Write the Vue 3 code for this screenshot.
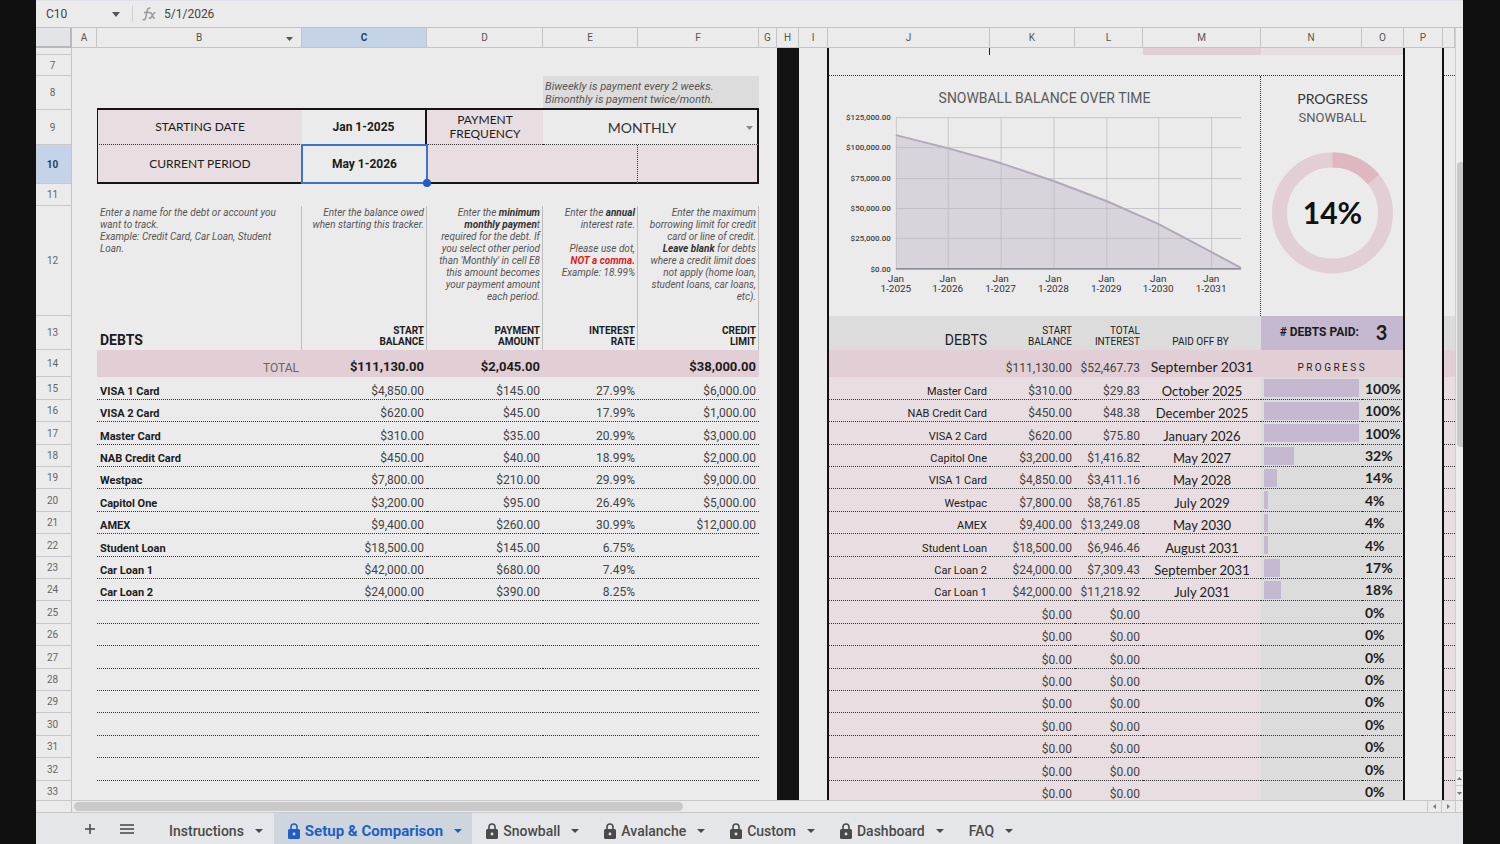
<script setup>
import { ref } from 'vue'

const nameBox = ref('C10')
const formula = ref('5/1/2026')
const frequency = ref('MONTHLY')

const columns = [
  ['A', 25], ['B', 205], ['C', 125], ['D', 116], ['E', 95], ['F', 121], ['G', 18], ['H', 22], ['I', 29],
  ['J', 162], ['K', 85], ['L', 68], ['M', 118], ['N', 101], ['O', 42], ['P', 39], ['Q', 12],
]

const debts = [
  ['VISA 1 Card', '$4,850.00', '$145.00', '27.99%', '$6,000.00'],
  ['VISA 2 Card', '$620.00', '$45.00', '17.99%', '$1,000.00'],
  ['Master Card', '$310.00', '$35.00', '20.99%', '$3,000.00'],
  ['NAB Credit Card', '$450.00', '$40.00', '18.99%', '$2,000.00'],
  ['Westpac', '$7,800.00', '$210.00', '29.99%', '$9,000.00'],
  ['Capitol One', '$3,200.00', '$95.00', '26.49%', '$5,000.00'],
  ['AMEX', '$9,400.00', '$260.00', '30.99%', '$12,000.00'],
  ['Student Loan', '$18,500.00', '$145.00', '6.75%', ''],
  ['Car Loan 1', '$42,000.00', '$680.00', '7.49%', ''],
  ['Car Loan 2', '$24,000.00', '$390.00', '8.25%', ''],
]

const payoffs = [
  ['Master Card', '$310.00', '$29.83', 'October 2025', 100],
  ['NAB Credit Card', '$450.00', '$48.38', 'December 2025', 100],
  ['VISA 2 Card', '$620.00', '$75.80', 'January 2026', 100],
  ['Capitol One', '$3,200.00', '$1,416.82', 'May 2027', 32],
  ['VISA 1 Card', '$4,850.00', '$3,411.16', 'May 2028', 14],
  ['Westpac', '$7,800.00', '$8,761.85', 'July 2029', 4],
  ['AMEX', '$9,400.00', '$13,249.08', 'May 2030', 4],
  ['Student Loan', '$18,500.00', '$6,946.46', 'August 2031', 4],
  ['Car Loan 2', '$24,000.00', '$7,309.43', 'September 2031', 17],
  ['Car Loan 1', '$42,000.00', '$11,218.92', 'July 2031', 18],
]

const rows = Array.from({ length: 19 }, (_, i) => ({
  n: 15 + i,
  tall: i % 5 === 0 || i % 5 === 2,
  left: debts[i] || ['', '', '', '', ''],
  right: payoffs[i] || ['', '$0.00', '$0.00', '', 0],
}))

const yTicks = [
  ['$125,000.00', 41], ['$100,000.00', 71], ['$75,000.00', 102],
  ['$50,000.00', 132], ['$25,000.00', 162], ['$0.00', 193],
]
const xTicks = [
  ['1-2025', 67], ['1-2026', 119], ['1-2027', 172], ['1-2028', 225],
  ['1-2029', 278], ['1-2030', 330], ['1-2031', 383],
]
const curve = '67,59 119,72 172,87 225,105 278,125 330,148 383,176 413,192'

const ring = 2 * Math.PI * 53
const slice = `${ring * 0.14} ${ring}`

const tabs = [
  { name: 'Instructions' },
  { name: 'Setup & Comparison', lock: true, active: true },
  { name: 'Snowball', lock: true },
  { name: 'Avalanche', lock: true },
  { name: 'Custom', lock: true },
  { name: 'Dashboard', lock: true },
  { name: 'FAQ' },
]
</script>

<template>
  <div class="app">
    <header class="formula-bar">
      <input v-model="nameBox" class="name-box" aria-label="Name box" />
      <button class="plain" aria-label="Named ranges">
        <svg width="8" height="5" viewBox="0 0 8 5"><path d="M0 0h8L4 5z" fill="#555" /></svg>
      </button>
      <span class="divider"></span>
      <svg class="fx" width="16" height="14" viewBox="0 0 16 14" fill="none" stroke="#999" stroke-width="1.5">
        <path d="M8.5 1.2C6.5.6 5.6 1.6 5.2 3.4L3.7 10.6C3.3 12.5 2.4 13.2.6 12.7M2 5.5H8M7.5 5.5C9.2 5.2 9.7 6.2 10.3 8.2S11.5 11.500 13 11M13.5 5.6C11.5 5.2 10.5 8 9.8 9.3S8 11.5 6.8 10.9" />
      </svg>
      <input v-model="formula" class="formula" aria-label="Formula" />
    </header>

    <main class="work">
      <div class="sheet">
        <table>
          <colgroup>
            <col class="w-num" />
            <col v-for="c in columns" :key="c[0]" :style="{ width: c[0] === 'Q' ? 'auto' : c[1] + 'px' }" />
          </colgroup>
          <thead>
            <tr class="heads">
              <td class="corner"></td>
              <th v-for="c in columns" :key="c[0]" scope="col" :class="{ picked: c[0] === 'C' }">
                <template v-if="c[0] !== 'Q'">{{ c[0] }}</template>
                <svg v-if="c[0] === 'B'" class="filter" width="7" height="4" viewBox="0 0 7 4"><path d="M0 0h7L3.5 4z" fill="#555" /></svg>
              </th>
            </tr>
          </thead>
          <tbody>
            <tr class="r6">
              <th></th><td colspan="7"></td><td class="ink"></td><td></td>
              <td class="edge tick"></td><td colspan="2"></td><td class="rose"></td><td colspan="2" class="blush"></td>
              <td class="edge"></td><td class="edge"></td>
            </tr>
            <tr class="r7">
              <th scope="row">7</th><td colspan="7"></td><td class="ink"></td><td></td>
              <td colspan="6" class="edge dots"></td><td class="edge"></td><td class="edge dots"></td>
            </tr>
            <tr class="r8">
              <th scope="row">8</th><td></td>
              <td colspan="3" class="thick-b"></td>
              <td colspan="2" class="thick-b hint">Biweekly is payment every 2 weeks.<br />Bimonthly is payment twice/month.</td>
              <td></td><td class="ink"></td><td></td>
              <td colspan="4" rowspan="5" class="edge chart">
                <svg viewBox="0 0 432 240" role="img" aria-label="Snowball balance over time">
                  <text x="216" y="27" class="c-title">SNOWBALL BALANCE OVER TIME</text>
                  <polygon :points="`67,193 ${curve} 413,193`" fill="#d9d4db" />
                  <g stroke="#bcb8bf" stroke-opacity=".7">
                    <line v-for="t in yTicks" :key="t[0]" x1="67" x2="413" :y1="t[1] + 0.5" :y2="t[1] + 0.5" />
                    <line v-for="t in xTicks" :key="t[0]" :x1="t[1] + 0.5" :x2="t[1] + 0.5" y1="41" y2="193" />
                  </g>
                  <line x1="67" x2="413" y1="193" y2="193" stroke="#8f8b92" stroke-width="1.5" />
                  <polyline :points="curve" fill="none" stroke="#b3a8bb" stroke-width="2" stroke-linejoin="round" />
                  <text v-for="t in yTicks" :key="t[0]" x="62" :y="t[1] + 3" class="c-y">{{ t[0] }}</text>
                  <g v-for="t in xTicks" :key="t[0]" class="c-x">
                    <text :x="t[1]" y="206">Jan</text>
                    <text :x="t[1]" y="216">{{ t[0] }}</text>
                  </g>
                </svg>
              </td>
              <td colspan="2" rowspan="5" class="chart">
                <svg viewBox="0 0 142 240" role="img" aria-label="Snowball progress">
                  <text x="71" y="28" class="d-thin">PROGRESS</text>
                  <text x="71" y="46" class="d-sub">SNOWBALL</text>
                  <circle cx="71" cy="137" r="53" fill="none" stroke="#e2ced5" stroke-width="15" />
                  <circle cx="71" cy="137" r="53" fill="none" stroke="#deb7c1" stroke-width="15" :stroke-dasharray="slice" transform="rotate(-90 71 137)" />
                  <text x="71" y="148" class="d-num">14%</text>
                </svg>
              </td>
              <td class="edge"></td><td class="edge"></td>
            </tr>
            <tr class="r9">
              <th scope="row">9</th><td></td>
              <td class="thick-l blush dots label">STARTING DATE</td>
              <td class="thick-r dots date">Jan 1-2025</td>
              <td class="blush dots label"><label for="freq">PAYMENT<br />FREQUENCY</label></td>
              <td colspan="2" class="thick-r dots pick">
                <select id="freq" v-model="frequency">
                  <option>MONTHLY</option><option>BIWEEKLY</option><option>BIMONTHLY</option>
                </select>
                <svg class="caret" width="7" height="4" viewBox="0 0 7 4"><path d="M0 0h7L3.5 4z" fill="#888" /></svg>
              </td>
              <td></td><td class="ink"></td><td></td><td class="edge"></td><td class="edge"></td>
            </tr>
            <tr class="r10">
              <th scope="row" class="picked">10</th><td></td>
              <td class="thick-l thick-b blush label">CURRENT PERIOD</td>
              <td class="thick-b date current">May 1-2026<span class="selection"></span></td>
              <td colspan="2" class="thick-b blush dots-r"></td>
              <td class="thick-b thick-r blush"></td>
              <td></td><td class="ink"></td><td></td><td class="edge"></td><td class="edge"></td>
            </tr>
            <tr class="r11">
              <th scope="row">11</th><td colspan="7"></td><td class="ink"></td><td></td><td class="edge"></td><td class="edge"></td>
            </tr>
            <tr class="r12">
              <th scope="row">12</th><td></td>
              <td class="rule help first">Enter a name for the debt or account you<br />want to track.<br />Example: Credit Card, Car Loan, Student<br />Loan.</td>
              <td class="rule help">Enter the balance owed<br />when starting this tracker.</td>
              <td class="rule help">Enter the <b>minimum</b><br /><b>monthly paymen</b>t<br />required for the debt. If<br />you select other period<br />than 'Monthly' in cell E8<br />this amount becomes<br />your payment amount<br />each period.</td>
              <td class="rule help">Enter the <b>annual</b><br />interest rate.<br /><br />Please use dot,<br /><b class="red">NOT a comma.</b><br />Example: 18.99%</td>
              <td class="rule help">Enter the maximum<br />borrowing limit for credit<br />card or line of credit.<br /><b>Leave blank</b> for debts<br />where a credit limit does<br />not apply (home loan,<br />student loans, car loans,<br />etc).</td>
              <td></td><td class="ink"></td><td></td><td class="edge"></td><td class="edge"></td>
            </tr>
            <tr class="r13">
              <th scope="row">13</th><td></td>
              <td class="rule big left"><b>DEBTS</b></td>
              <td class="rule"><b>START<br />BALANCE</b></td>
              <td class="rule"><b>PAYMENT<br />AMOUNT</b></td>
              <td class="rule"><b>INTEREST<br />RATE</b></td>
              <td class="rule"><b>CREDIT<br />LIMIT</b></td>
              <td></td><td class="ink"></td><td></td>
              <td class="edge ash big">DEBTS</td>
              <td class="ash">START<br />BALANCE</td>
              <td class="ash">TOTAL<br />INTEREST</td>
              <td class="ash mid">PAID OFF BY</td>
              <td class="lilac paid">#&nbsp;DEBTS&nbsp;PAID:</td>
              <td class="lilac count">3</td>
              <td class="edge"></td><td class="edge ash"></td>
            </tr>
            <tr class="r14">
              <th scope="row">14</th><td></td>
              <td class="rose total">TOTAL</td>
              <td class="rose sum">$111,130.00</td>
              <td class="rose sum">$2,045.00</td>
              <td class="rose"></td>
              <td class="rose sum">$38,000.00</td>
              <td></td><td class="ink"></td><td></td>
              <td class="edge rose"></td>
              <td class="rose num">$111,130.00</td>
              <td class="rose num">$52,467.73</td>
              <td class="rose when lead">September 2031</td>
              <td colspan="2" class="rose spaced">P R O G R E S S</td>
              <td class="edge"></td><td class="edge rose"></td>
            </tr>
            <tr v-for="r in rows" :key="r.n" class="item" :class="{ tall: r.tall }">
              <th scope="row">{{ r.n }}</th><td></td>
              <td class="dots left"><b>{{ r.left[0] }}</b></td>
              <td v-for="k in 4" :key="k" class="dots num">{{ r.left[k] }}</td>
              <td></td><td class="ink"></td><td></td>
              <td class="edge blush dots">{{ r.right[0] }}</td>
              <td class="blush dots num">{{ r.right[1] }}</td>
              <td class="blush dots num">{{ r.right[2] }}</td>
              <td class="blush dots when">{{ r.right[3] }}</td>
              <td class="ash dots meter"><div class="bar" :style="{ width: r.right[4] + '%' }"></div></td>
              <td class="ash dots pct">{{ r.right[4] }}%</td>
              <td class="edge"></td><td class="edge blush dots"></td>
            </tr>
          </tbody>
        </table>
      </div>
      <div class="v-scroll">
        <div class="v-track"><div class="v-thumb"></div></div>
        <button class="v-btn" aria-label="Scroll up"><svg width="5" height="3" viewBox="0 0 5 3"><path d="M0 3h5L2.5 0z" fill="#777" /></svg></button>
        <button class="v-btn" aria-label="Scroll down"><svg width="5" height="3" viewBox="0 0 5 3"><path d="M0 0h5L2.5 3z" fill="#777" /></svg></button>
      </div>
    </main>

    <div class="h-scroll">
      <div class="h-head"></div>
      <div class="h-track"><div class="h-thumb"></div></div>
      <button class="h-btn" aria-label="Scroll left"><svg width="3" height="5" viewBox="0 0 3 5"><path d="M3 0v5L0 2.5z" fill="#777" /></svg></button>
      <button class="h-btn" aria-label="Scroll right"><svg width="3" height="5" viewBox="0 0 3 5"><path d="M0 0v5L3 2.5z" fill="#777" /></svg></button>
      <div class="h-end"></div>
    </div>

    <nav class="tabs">
      <button class="tool" aria-label="Add sheet"><svg width="10" height="10" viewBox="0 0 10 10"><path d="M5 0v10M0 5h10" stroke="#444" stroke-width="1.5" /></svg></button>
      <button class="tool" aria-label="All sheets"><svg width="14" height="10" viewBox="0 0 14 10"><path d="M0 1h14M0 5h14M0 9h14" stroke="#444" stroke-width="1.5" /></svg></button>
      <button v-for="t in tabs" :key="t.name" class="tab" :class="{ active: t.active }">
        <svg v-if="t.lock" class="lock" width="12" height="16" viewBox="0 0 12 16">
          <path d="M3 7V4a3 3 0 0 1 6 0v3" fill="none" stroke="currentColor" stroke-width="1.6" />
          <path fill-rule="evenodd" fill="currentColor" d="M1.5 6h9A1.5 1.5 0 0 1 12 7.5v7a1.5 1.5 0 0 1-1.5 1.5h-9A1.5 1.5 0 0 1 0 14.5v-7A1.5 1.5 0 0 1 1.5 6zM6 9.6a1.4 1.4 0 1 0 0 2.8a1.4 1.4 0 1 0 0-2.8z" />
        </svg>
        <span>{{ t.name }}</span>
        <svg class="down" width="8" height="4" viewBox="0 0 8 4"><path d="M0 0h8L4 4z" fill="currentColor" /></svg>
      </button>
    </nav>
  </div>
</template>

<style>
body { background: #101010; }
</style>

<style scoped>
.app {
  box-sizing: border-box;
  display: flex;
  flex-direction: column;
  height: 100vh;
  margin: 0 37px 0 36px;
  background: #ebebeb;
  color: #1c1c1c;
  font-family: Roboto, "Liberation Sans", sans-serif;
  font-size: 12px;
}
button { border: 0; padding: 0; background: none; font: inherit; color: inherit; display: flex; align-items: center; justify-content: center; }
input, select { border: 0; padding: 0; margin: 0; background: none; color: #444; font: inherit; min-width: 0; }

.formula-bar {
  box-sizing: border-box;
  flex: none;
  height: 28px;
  display: flex;
  align-items: center;
  border-top: 1px solid #e2e2ea;
  border-bottom: 1px solid #c4c4c4;
  padding-left: 10px;
}
.name-box { width: 66px; }
.plain { width: 8px; }
.divider { width: 1px; height: 16px; margin: 0 9px 0 12px; background: #cdd0d6; }
.formula { flex: 1; margin-left: 6px; }

.work { flex: 1; min-height: 0; display: flex; }
.sheet { flex: 1; min-width: 0; overflow: hidden; }

table { width: 100%; table-layout: fixed; border-spacing: 0; border-collapse: separate; }
.w-num { width: 36px; }
td, th { box-sizing: border-box; padding: 0; }
thead th { font-size: 10px; font-weight: 400; color: #555; border-right: 1px solid #c4c4c4; border-bottom: 1px solid #c4c4c4; position: relative; }
tbody th { font-size: 10px; font-weight: 400; color: #666; border-right: 1px solid #c4c4c4; border-bottom: 1px solid #c9c9c9; padding-right: 2px; }
thead th.picked, tbody th.picked { background: #c5d3e9; color: #2b3f63; font-weight: 700; }
.corner { background: #e3e4e7; border-right: 2px solid #b9b9b9; border-bottom: 2px solid #b9b9b9; }
.filter { position: absolute; right: 8px; top: 9px; }

.heads { height: 20px; }
.r6 { height: 7px; }
.r7 { height: 21px; }
.r8 { height: 34px; }
.r9 { height: 35px; }
.r10 { height: 39px; }
.r11 { height: 22px; }
.r12 { height: 110px; }
.r13 { height: 34px; }
.r14 { height: 27px; }
.item { height: 22px; }
.item.tall { height: 23px; }

.ink { background: #131313; }
.edge { border-left: 1px solid #111; box-shadow: -1px 0 0 #111; }
.tick { border-right: 1px solid #222; }
.rose { background: #e2ced5; }
.blush { background: #e8dde1; }
.ash { background: #dcdcdc; }
.lilac { background: #c5b9d1; }
.dots { border-bottom: 1px dotted #333; }
.dots-r { border-right: 1px dotted #333; }
.rule { border-right: 1px solid #bdbdbd; }
.thick-b { border-bottom: 2px solid #151515; }
.thick-r { border-right: 2px solid #151515; }
.thick-l { border-left: 1px solid #151515; }

.hint { background: #dcdcdc; padding: 2px 0 0 2px; font-size: 11px; line-height: 13px; font-style: italic; color: #555; vertical-align: middle; }
.label { text-align: center; font-family: Lato, Roboto, sans-serif; font-size: 12px; line-height: 14px; }
.date { text-align: center; font-weight: 700; }
.pick { position: relative; }
.pick select { display: block; width: 100%; height: 30px; padding: 0 26px 0 10px; appearance: none; text-align: center; text-align-last: center; font-family: Lato, Roboto, sans-serif; font-size: 14px; color: #333; }
.caret { position: absolute; right: 4px; top: 16px; }
.current { position: relative; }
.selection { position: absolute; inset: -1px -1px -2px -1px; border: 2px solid #3b74cc; }
.selection::after { content: ""; position: absolute; right: -5px; bottom: -5px; width: 8px; height: 8px; border-radius: 50%; background: #1c5ec6; }

.help { vertical-align: top; text-align: right; padding: 1px 2px 0 0; font-size: 10px; line-height: 12px; font-style: italic; color: #555; white-space: nowrap; }
.help.first { text-align: left; padding-left: 3px; }
.help b { color: #333; }
.help b.red { color: #e01b1b; }

.r13 td { vertical-align: bottom; text-align: right; padding: 0 3px 3px 0; font-size: 10px; line-height: 11px; }
.r13 .rule { padding-right: 2px; }
.r13 .big { font-size: 14px; line-height: 14px; }
.r13 .left { text-align: left; padding-left: 3px; }
.r13 .mid { text-align: center; }
.r13 .paid { vertical-align: middle; font-size: 12px; font-weight: 700; line-height: 16px; }
.r13 .count { vertical-align: middle; text-align: center; font-family: Lato, Roboto, sans-serif; font-size: 20px; font-weight: 700; line-height: 20px; }

.r14 td { vertical-align: bottom; text-align: right; padding: 0 3px 2px 0; line-height: 14px; }
.r14 .total { color: #666; }
.r14 .sum { font-size: 13px; font-weight: 700; padding-bottom: 3px; }
.r14 td.when { padding: 0 0 3px; }
.r14 .spaced { text-align: center; font-size: 10px; }

.item td { vertical-align: bottom; text-align: right; padding: 0 3px 1px 0; font-size: 11px; line-height: 13px; white-space: nowrap; }
.item td.left { text-align: left; padding-left: 3px; }
.item td.num, .r14 .num { font-size: 12px; color: #444; }
.item td.when, .r14 td.when { text-align: center; font-family: Lato, Roboto, sans-serif; font-size: 13px; padding-right: 0; }
.r14 td.lead { font-size: 14px; }
.item td.meter { vertical-align: top; padding: 2px 3px 0 3px; }
.bar { height: 18px; background: #c5b9d1; }
.item td.pct { text-align: left; padding: 0 0 2px 3px; font-family: Lato, Roboto, sans-serif; font-size: 14px; font-weight: 700; line-height: 16px; }

.chart { vertical-align: top; }
.chart svg { display: block; width: 100%; height: 240px; }
.chart.edge { border-right: 1px dotted #333; }
.c-title { font-size: 14px; text-anchor: middle; fill: #5a5a5a; }
.c-y { font-size: 8px; font-weight: 500; text-anchor: end; fill: #444; }
.c-x { font-size: 10px; text-anchor: middle; fill: #333; }
.d-thin { font-family: Lato, sans-serif; font-size: 14px; text-anchor: middle; fill: #333; }
.d-sub { font-size: 13px; text-anchor: middle; fill: #5a5a5a; }
.d-num { font-family: Lato, sans-serif; font-size: 30px; font-weight: 700; text-anchor: middle; fill: #111; }

.v-scroll { flex: none; width: 8px; display: flex; flex-direction: column; box-sizing: border-box; border-left: 1px solid #cfcfcf; background: #ededed; }
.v-track { flex: 1; padding-top: 134px; }
.v-thumb { height: 285px; margin-left: 1px; background: #c8c8c8; border-radius: 4px 0 0 4px; }
.v-btn { height: 15px; border-top: 1px solid #c8c8c8; }

.h-scroll { flex: none; height: 12px; display: flex; box-sizing: border-box; border-top: 1px solid #c8c8c8; }
.h-head { width: 35px; border-right: 1px solid #c4c4c4; }
.h-track { flex: 1; padding: 1px 0 0 2px; }
.h-thumb { width: 45%; height: 9px; border-radius: 5px; background: #c9c9c9; }
.h-btn { width: 14px; border-left: 1px solid #c8c8c8; }
.h-end { width: 7px; border-left: 1px solid #c8c8c8; }

.tabs { flex: none; box-sizing: border-box; height: 32px; display: flex; background: #e4e6ea; border-top: 1px solid #c8c8c8; padding-left: 35px; color: #4a4a4a; font-size: 14px; font-weight: 500; }
.tool { width: 37px; }
.tab { padding: 4px 11px 0 14px; white-space: nowrap; }
.tool + .tab { margin-left: 10px; }
.lock { margin-right: 5px; }
.down { margin-left: 11px; }
.active { background: #cfd5dd; color: #1f5fc4; font-size: 15px; font-weight: 700; padding: 4px 10px 0 14px; }
</style>
